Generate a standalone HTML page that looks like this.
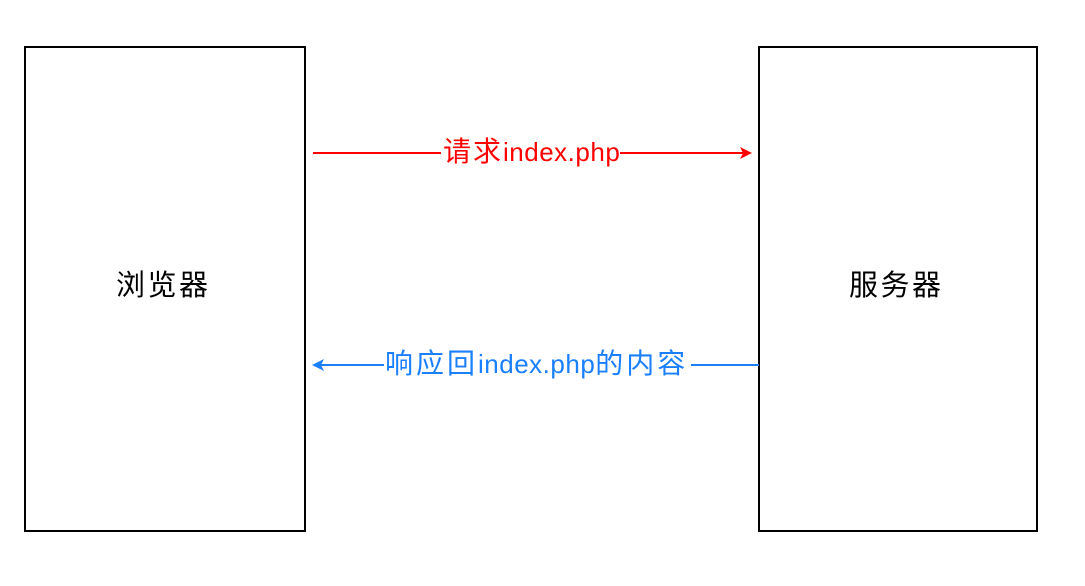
<!DOCTYPE html><html><head><meta charset="utf-8"><style>
body{margin:0;width:1085px;height:586px;background:#fff;position:relative;overflow:hidden;font-family:"Liberation Sans","Noto Sans CJK SC",sans-serif}
.box{position:absolute;border:2px solid #000;box-sizing:border-box}
.t{position:absolute;white-space:nowrap;line-height:1}
.l{position:absolute;height:2px}
.c{font-size:28px;letter-spacing:2px}
.e{font-size:26px;letter-spacing:0.5px}
</style></head><body>
<div class="box" style="left:24px;top:46px;width:282px;height:486px"></div>
<div class="box" style="left:758px;top:46px;width:280px;height:486px"></div>
<div class="t" style="left:116px;top:272px;font-size:29px;letter-spacing:2.5px">浏览器</div>
<div class="t" style="left:849px;top:272px;font-size:29px;letter-spacing:2.5px">服务器</div>
<div class="l" style="left:313px;top:152px;width:128px;background:#f00"></div>
<div class="t" style="left:443px;top:138px;color:#f00"><span class="c">请求</span><span class="e">index.php</span></div>
<div class="l" style="left:620px;top:152px;width:128px;background:#f00"></div>
<svg style="position:absolute;left:740px;top:147px" width="14" height="12"><polygon points="0,0 12,6 0,12 3,6" fill="#f00"/></svg>
<div class="l" style="left:318px;top:364px;width:66px;background:#1a80ff"></div>
<svg style="position:absolute;left:312px;top:359px" width="14" height="12"><polygon points="0,6 12,0 9,6 12,12" fill="#1a80ff"/></svg>
<div class="t" style="left:385px;top:350px;color:#1a80ff"><span class="c" style="letter-spacing:3px">响应回</span><span class="e">index.php</span><span class="c" style="letter-spacing:3px">的内容</span></div>
<div class="l" style="left:691px;top:364px;width:68px;background:#1a80ff"></div>
</body></html>
